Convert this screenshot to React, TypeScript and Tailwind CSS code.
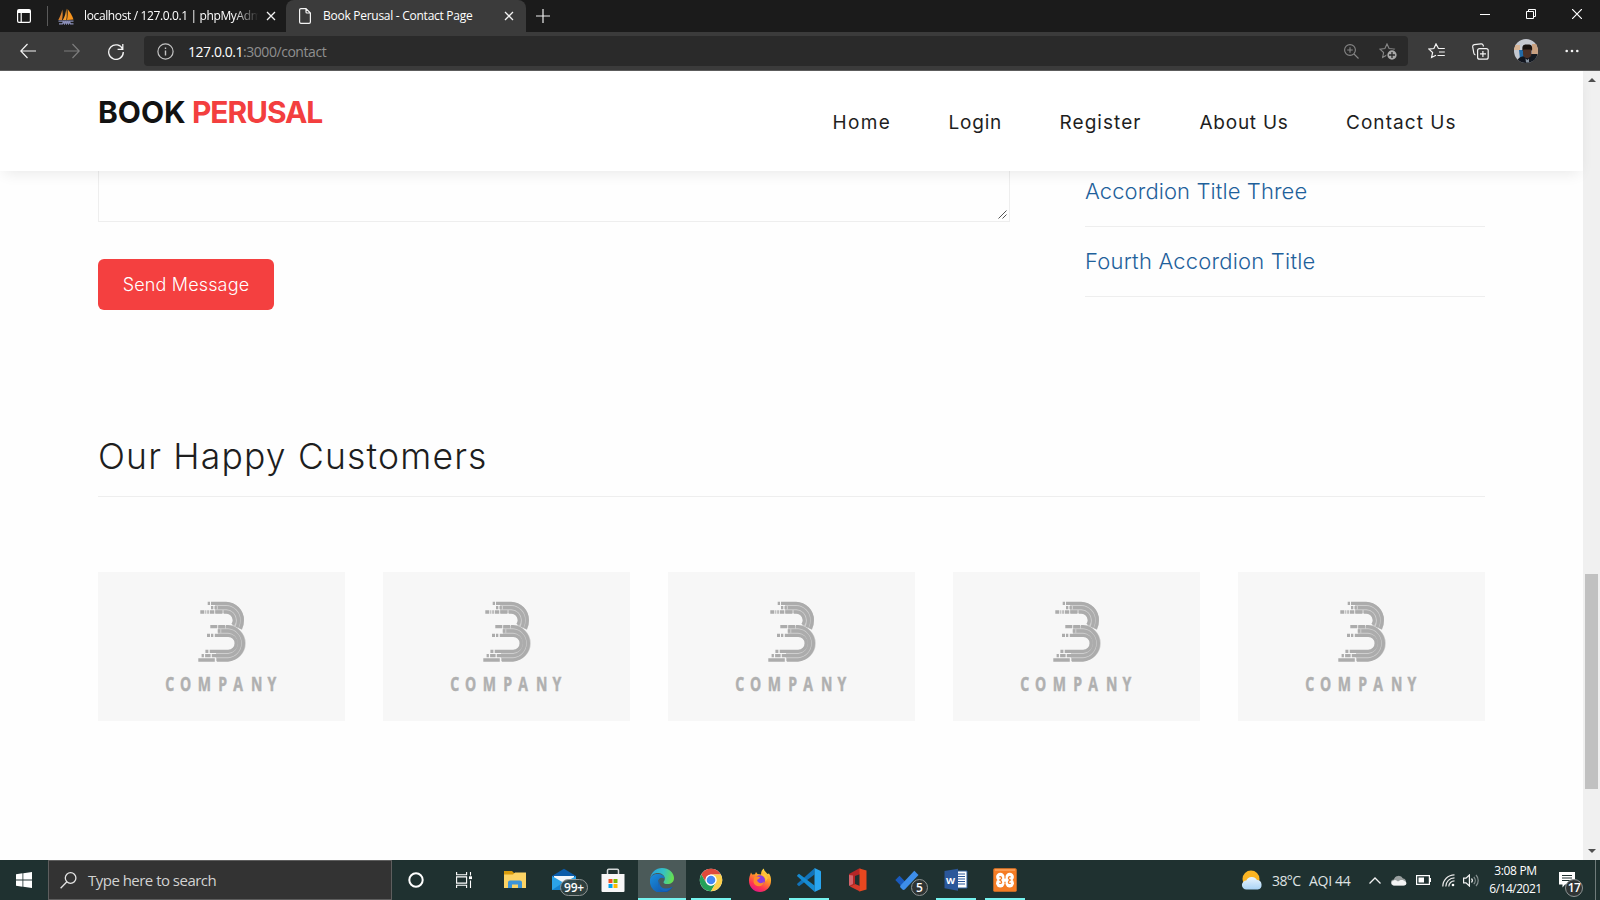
import React from "react";

type IconProps = { className?: string };

/* ---------- Browser chrome ---------- */

const CloseGlyph = ({ className = "" }: IconProps) => (
  <svg className={className} viewBox="0 0 10 10" fill="none" stroke="#f2f2f2" strokeWidth="1.3">
    <path d="M1 1l8 8M9 1L1 9" />
  </svg>
);

function TabStrip() {
  return (
    <div className="flex h-8 bg-[#1b1b1b] text-[12px] text-white">
      <div className="flex w-[47px] items-center pl-[17px]">
        <svg width="14" height="14" viewBox="0 0 14 14">
          <path fillRule="evenodd" fill="#fff" d="M2 0h10a2 2 0 0 1 2 2v10a2 2 0 0 1-2 2H2a2 2 0 0 1-2-2V2a2 2 0 0 1 2-2zm-.8 4v8a.8.8 0 0 0 .8.8h1.6V4zm3.6 0v8.800h7.200a.8.8 0 0 0 .8-.8V4z" />
        </svg>
      </div>
      <div className="mt-1.5 h-5 w-px bg-[#5a5a5a]" />
      <div className="flex w-[238px] items-center pl-[10px]">
        <svg width="16" height="17" viewBox="0 0 16 17" className="shrink-0">
          <path d="M.3 12C2 9 3.500 5 4.300 1.500 4.900 5 4.800 9 4 12z" fill="#d9822f" />
          <path d="M4.800 12C6.800 9 8 4.500 8.200.500 9 4.500 9 9 8.300 12z" fill="#f89c2c" />
          <path d="M9 12c.7-3 .8-7 .6-11C12 4 14.500 8 15.500 11.600z" fill="#f7941d" />
          <path d="M.5 13.200h15M1 15.800h3.500l1-2 1 2 1-2 1 2 1-2 1 2 1-2 1 2h3" fill="none" stroke="#8b8fb8" strokeWidth="1.300" />
        </svg>
        <span className="ml-[10px] w-[178px] whitespace-nowrap tracking-[-0.37px] [mask-image:linear-gradient(to_right,#000_84%,transparent_98%)]">localhost / 127.0.0.1 | phpMyAdm</span>
        <CloseGlyph className="ml-[4px] h-[10px] w-[10px] shrink-0" />
      </div>
      <div className="flex w-[240px] items-center rounded-t-lg bg-[#3b3b3b] pl-[13px]">
        <svg width="12" height="16" viewBox="0 0 12 16" fill="none" stroke="#f4f4f4" strokeWidth="1.200">
          <path d="M2 .6h5L11.400 5v9a1.400 1.400 0 0 1-1.400 1.400H2A1.400 1.400 0 0 1 .6 14V2A1.400 1.400 0 0 1 2 .6zM7 .8V4a1 1 0 0 0 1 1h3.200" />
        </svg>
        <span className="ml-3 w-[176px] whitespace-nowrap tracking-[-0.27px]">Book Perusal - Contact Page</span>
        <CloseGlyph className="ml-[5px] h-[10px] w-[10px]" />
      </div>
      <div className="flex flex-1 items-center pl-[10px]">
        <svg width="14" height="14" viewBox="0 0 14 14" stroke="#eee" strokeWidth="1.200"><path d="M7 0v14M0 7h14" /></svg>
      </div>
      <div className="flex w-[120px] items-start gap-9 pt-[9px]">
        <svg width="10" height="10" viewBox="0 0 10 10"><path d="M0 5.500h10" stroke="#fff" /></svg>
        <svg width="10" height="10" viewBox="0 0 10 10" fill="none" stroke="#fff"><path d="M.5 2.500h7v7h-7zM2.500 2.500v-2h7v7h-2" /></svg>
        <svg width="10" height="10" viewBox="0 0 10 10" stroke="#fff" strokeWidth="1.200"><path d="M0 0l10 10M10 0L0 10" /></svg>
      </div>
    </div>
  );
}

const star = "M8 .9l2.100 4.600 5 .6-3.700 3.400 1 5L8 12l-4.400 2.500 1-5L.9 6.100l5-.6z";

function Toolbar() {
  return (
    <div className="flex h-[39px] items-center border-b border-[#5c5c5c] bg-[#3b3b3b] pl-5">
      <svg width="16" height="16" viewBox="0 0 16 16" fill="none" stroke="#f4f4f4" strokeWidth="1.200"><path d="M16 8H.8M7.500 1L.8 8l6.700 7" /></svg>
      <svg className="ml-7" width="16" height="16" viewBox="0 0 16 16" fill="none" stroke="#7d7d7d" strokeWidth="1.200"><path d="M0 8h15.200M8.500 1l6.700 7-6.700 7" /></svg>
      <svg className="ml-7" width="16" height="17" viewBox="0 0 16 17" fill="none" stroke="#f4f4f4" strokeWidth="1.300"><path d="M14.700 6.200A7.300 7.300 0 1 0 15.300 9M14.800 1v5.300H9.600" /></svg>
      <div className="ml-5 flex h-[30px] w-[1264px] items-center rounded bg-[#2a2a2a] pl-[13px]">
        <svg width="17" height="17" viewBox="0 0 17 17" fill="none" stroke="#c4c4c4" strokeWidth="1.200"><circle cx="8.500" cy="8.500" r="7.600" /><path d="M8.500 7.400v5M8.500 4.600v1.300" strokeWidth="1.400" /></svg>
        <span className="ml-[14px] flex-1 text-[14px] tracking-[-0.45px] text-[#8f8f8f]"><span className="text-white">127.0.0.1</span>:3000/contact</span>
        <svg width="15" height="15" viewBox="0 0 15 15" fill="none" stroke="#868686" strokeWidth="1.100"><circle cx="6" cy="6" r="5.400" /><path d="M10 10l4.500 4.500M3.200 6h5.600M6 3.200v5.600" /></svg>
        <svg className="ml-5 mr-[10px]" width="19" height="17" viewBox="0 0 19 17" fill="none" stroke="#868686" strokeWidth="1.100"><path d={star} /><circle cx="13" cy="12" r="5.200" fill="#a8a8a8" stroke="#2a2a2a" /><path d="M13 9v6M10 12h6" stroke="#2a2a2a" strokeWidth="1.300" /></svg>
      </div>
      <svg className="ml-5" width="17" height="17" viewBox="0 0 17 17" fill="none" stroke="#f4f4f4" strokeWidth="1.200">
        <path d="M10.500 5.500L8 .9 5.900 5.500l-5 .6 3.700 3.400-1 5L8 12.300M10.200 5.500h6.600M11 9h5.800M9.500 12.500h7.300" />
      </svg>
      <svg className="ml-[27px]" width="17" height="17" viewBox="0 0 17 17" fill="none" stroke="#f4f4f4" strokeWidth="1.200">
        <rect x="5.600" y="5.600" width="10.600" height="10.600" rx="2" /><path d="M10.900 8v6M8 10.900h6M3.400 11.800A2 2 0 0 1 1.800 10L.7 3.900A2 2 0 0 1 2.300 1.700L9 .8a2 2 0 0 1 2.200 1.500l.3 1.200" />
      </svg>
      <svg className="ml-[25px]" width="24" height="24" viewBox="0 0 24 24">
        <defs><clipPath id="avatar"><circle cx="12" cy="12" r="12" /></clipPath></defs>
        <g clipPath="url(#avatar)">
          <path d="M0 0h24v24H0z" fill="#c4c8d0" /><path d="M0 6h6v5H0z" fill="#d8b596" /><path d="M18 5h6v12h-6z" fill="#c8a080" />
          <path d="M5 11h6v9H6z" fill="#236ba8" /><path d="M3 24c0-5 4-7 10.500-7s9.500 2 9.500 7z" fill="#11151e" /><path d="M16 15h8v7h-8z" fill="#141a22" />
          <path d="M9 10h8.500v5c0 5.500-8.500 5.500-8.500 0z" fill="#4d3127" /><path d="M8.500 12c-.8-7 2-6.500 5-6.500s5.300 0 4.500 6.500l-1-1.500H9.500z" fill="#17110f" />
          <path d="M11.500 19.500l2 1.500 1.500-1.500v4h-3z" fill="#8793a0" />
        </g>
      </svg>
      <svg className="ml-[27px]" width="14" height="4" viewBox="0 0 14 4" fill="#f4f4f4"><circle cx="1.700" cy="2" r="1.300" /><circle cx="7" cy="2" r="1.300" /><circle cx="12.300" cy="2" r="1.300" /></svg>
    </div>
  );
}

/* ---------- Web page ---------- */

function SiteHeader() {
  return (
    <header className="relative z-10 flex h-[100px] justify-between bg-white pl-[98px] pr-[126px] shadow-[0_6px_14px_-4px_rgba(0,0,0,0.09)]">
      <h2 className="flex whitespace-nowrap pt-5 text-[30px] leading-[42px] font-bold text-[#121212]">
        <span className="w-[94px]">BOOK</span>
        <span className="tracking-[-1.100px] text-[#f33f3f]">PERUSAL</span>
      </h2>
      <nav className="flex pt-10 text-[19px] leading-6 whitespace-nowrap text-[#1e1e1e]">
        <a className="w-[116px] tracking-[1.400px]">Home</a>
        <a className="w-[111px] tracking-[0.800px]">Login</a>
        <a className="w-[140px] tracking-[1.050px]">Register</a>
        <a className="w-[146.500px] tracking-[0.750px]">About Us</a>
        <a className="w-[111px] tracking-[1.050px]">Contact Us</a>
      </nav>
    </header>
  );
}

function Contact() {
  return (
    <section className="flex justify-between">
      <div className="w-[912px]">
        <div className="flex h-[51px] items-end justify-end border border-t-0 border-[#eee]">
          <svg className="mr-[2px] mb-[2px]" width="9" height="9" viewBox="0 0 9 9" stroke="#555" strokeWidth="1"><path d="M.5 8.500l8-8M4.500 8.500l4-4" /></svg>
        </div>
        <button className="mt-[37px] flex h-[51px] w-44 items-center justify-center rounded-md bg-[#f44040] text-[18px] font-light tracking-[0.150px] text-white">Send Message</button>
      </div>
      <ul className="w-[400px] text-[22px] font-[340] whitespace-nowrap text-[#1f619b]">
        <li className="h-[56px] border-b border-[#eee] pt-[4px] leading-8 tracking-[0.100px]">Accordion Title Three</li>
        <li className="h-[70px] border-b border-[#eee] pt-[18px] leading-8 tracking-[0.200px]">Fourth Accordion Title</li>
      </ul>
    </section>
  );
}

function CompanyLogo() {
  return (
    <svg width="247" height="149" viewBox="0 0 247 149" className="block bg-[#f7f7f7]">
      <g fill="none" stroke="#cfcfcf" strokeWidth="11">
        <path d="M117 35.700h11.500a12.500 12.500 0 0 1 12 12.500q0 4-1.500 7.500M120 59h10a12.200 12.200 0 0 1 0 24.500H118" />
      </g>
      <g fill="none" stroke="#acacac" strokeWidth="3.300">
        <path d="M109.700 31.300h2.300m1 0h15a16.800 16.800 0 0 1 16.300 17q0 5-2 8.500" />
        <path d="M113 35.700h2.300m1.200 0h2.300m1.200 0h8.500a12.500 12.500 0 0 1 12 12.500q0 4-1.500 7" />
        <path d="M102.300 40h4m1 0h1m1 0h1.500m1 0h4.500m1 0h7m1.500 0h2.500a8.200 8.200 0 0 1 6.500 12.800" />
        <path d="M112.300 54.700h7m1 0h6.700m1 0h2a16.700 16.700 0 0 1 0 33.300H118.800m-2 0H100.300" />
        <path d="M119.700 59h2.600m1 0h7a12.400 12.400 0 0 1 0 24.700H113.800m-1.200 0h-5.500m-1.200 0h-2.300" />
        <path d="M109 63.300h3m1 0h2.300m1.500 0h13.500a8 8 0 0 1 0 16H111.700m-1.300 0h-3" />
      </g>
      <text transform="scale(.72 1)" x="93.500 114 138.500 167 188 212.500 235.500" y="119" fill="#b0b0b0" stroke="#b0b0b0" strokeWidth=".5" fontSize="19.500" fontWeight="700" className="font-['Open_Sans',sans-serif]">COMPANY</text>
    </svg>
  );
}

function Scrollbar() {
  return (
    <div className="flex w-[17px] flex-col items-center bg-[#f0f0f0]">
      <svg className="mt-[7px]" width="8" height="4" viewBox="0 0 8 4" fill="#505050"><path d="M4 0l4 4H0z" /></svg>
      <div className="mt-[492px] h-[215px] w-[13px] bg-[#c1c1c1]" />
      <svg className="mt-[60px]" width="8" height="4" viewBox="0 0 8 4" fill="#505050"><path d="M0 0h8L4 4z" /></svg>
    </div>
  );
}

function Page() {
  return (
    <div className="flex h-[789px] overflow-hidden bg-[#fefefe] font-[Inter,sans-serif]">
      <div className="w-[1583px]">
        <SiteHeader />
        <main className="pl-[98px] pr-[98px]">
          <Contact />
          <h2 className="mt-[122px] h-[65px] border-b border-[#eee] text-[35.500px] leading-[49px] font-[340] tracking-[1.180px] whitespace-nowrap text-[#1e1e1e]">Our Happy Customers</h2>
          <div className="mt-[75px] flex justify-between">
            {[0, 1, 2, 3, 4].map((n) => <CompanyLogo key={n} />)}
          </div>
        </main>
      </div>
      <Scrollbar />
    </div>
  );
}

/* ---------- Taskbar ---------- */

function App24({ children, open, active }: { children: React.ReactNode; open?: boolean; active?: boolean }) {
  return (
    <div className="flex w-[49px] justify-center">
      <div className={`relative flex h-10 items-center justify-center ${active ? "w-12 bg-[#4b5a59]" : "w-10"} ${open ? "border-b-2 border-[#76f3ef] pt-0.5" : ""}`}>{children}</div>
    </div>
  );
}

const Folder = () => (
  <svg width="24" height="24" viewBox="0 0 24 24"><path d="M1 3h8l2 2h11v5H1z" fill="#d89b0c" /><path d="M1 6.500h9l2-2h11V20H1z" fill="#fcd364" /><path d="M5 20v-5.500a2 2 0 0 1 2-2h10a2 2 0 0 1 2 2V20h-4v-3.500H9V20z" fill="#3d94d8" /></svg>
);
const Mail = () => (
  <svg width="24" height="24" viewBox="0 0 24 24"><path d="M0 8L12 .8 24 8v4H0z" fill="#0c5ba8" /><path d="M2 8h20v10H2z" fill="#f3f6f9" /><path d="M0 8l12 7 12-7v14H0z" fill="#2ba3e8" /><path d="M0 22l12-8 12 8z" fill="#1483d0" /></svg>
);
const Store = () => (
  <svg width="24" height="25" viewBox="0 0 24 25"><path d="M6.500 7V2.500a1.200 1.200 0 0 1 1.200-1.200h8.600a1.200 1.200 0 0 1 1.200 1.200V7" fill="none" stroke="#d5d9d9" strokeWidth="1.500" /><path d="M.5 6h23v17a1 1 0 0 1-1 1h-21a1 1 0 0 1-1-1z" fill="#f7f7f7" /><path d="M7.500 11h4v4h-4z" fill="#f25022" /><path d="M12.500 11h4v4h-4z" fill="#7fba00" /><path d="M7.500 16h4v4h-4z" fill="#00a4ef" /><path d="M12.500 16h4v4h-4z" fill="#ffb900" /></svg>
);
const Edge = () => (
  <svg width="24" height="24" viewBox="0 0 24 24">
    <defs>
      <linearGradient id="edgeTop" x1="0" x2="1" y1=".2" y2=".4"><stop stopColor="#259fe0" /><stop offset=".55" stopColor="#35c1c4" /><stop offset="1" stopColor="#66e04f" /></linearGradient>
      <linearGradient id="edgeBody" x1="0" x2="1" y1="0" y2="1"><stop stopColor="#1b8fdc" /><stop offset="1" stopColor="#0f4ba4" /></linearGradient>
    </defs>
    <path d="M.1 11C.8 4.500 6 0 12 0c6.800 0 12 4.700 12 10 0 4-3 6-6.500 6-3 0-4-1-4-1.800 0-.8 1.300-1.300 1.300-3.500C14.800 7 11 5 7.500 5 4 5 1 7 .1 11z" fill="url(#edgeTop)" />
    <path d="M.1 11C1 7.500 4 6 7.500 6c4 0 7.200 2 7.300 4.700C11 8 8 11 8 14c0 5 5 8 10 6.500 1.500-.4 3-1.400 4-1.800.5-.1.500.2.300.5A12 12 0 0 1 .1 11z" fill="url(#edgeBody)" />
    <path d="M9.500 11.500C6 16 9 24 16.500 23c2.500-.8 4.700-2.500 5.800-3.900-8 3.500-14 .9-12.800-7.600z" fill="#1769bd" />
  </svg>
);
const Chrome = () => (
  <svg width="24" height="24" viewBox="0 0 24 24"><circle cx="12" cy="12" r="11.200" fill="#f7f7f7" /><path d="M2.300 6.400A11.200 11.200 0 0 1 21.700 6.400H12a5.600 5.600 0 0 0-4.900 8.400z" fill="#e04a3c" /><path d="M2.300 6.400A11.200 11.200 0 0 0 12 23.200l4.900-8.400a5.600 5.600 0 0 1-9.800 0z" fill="#24a158" /><path d="M21.700 6.400H12a5.600 5.600 0 0 1 4.900 8.400L12 23.200A11.200 11.200 0 0 0 21.700 6.400z" fill="#fdd04a" /><circle cx="12" cy="12" r="5.400" fill="#fff" /><circle cx="12" cy="12" r="4.300" fill="#4587f3" /></svg>
);
const Firefox = () => (
  <svg width="24" height="24" viewBox="0 0 24 24">
    <defs><linearGradient id="fox" x1=".8" x2=".3" y1="0" y2="1"><stop stopColor="#ffe84a" /><stop offset=".4" stopColor="#ff9a26" /><stop offset=".75" stopColor="#ff3750" /><stop offset="1" stopColor="#e31587" /></linearGradient></defs>
    <path d="M3 4.500l1.200 2L7 6.200l1-2.200 1.500 2 3.500.4C13 3.500 14 1.500 16 .5c-.3 2 1.500 3 3.500 5.500L21 5.500c1.500 2 2.300 5 2 7.500a11 11 0 0 1-22 0C.8 9.500 2 7.500 3 4.500z" fill="url(#fox)" />
    <circle cx="12" cy="12.300" r="5" fill="#8a3de0" /><path d="M6 9.500c2-1.500 4.500-1.500 6.500.2-2 .3-1.800 2-3.500 2.300.5 3 5 4.500 7 1.500-.5 6-9 6.500-10.500.5z" fill="#ff8b2a" /><path d="M13 7c3 .5 5 3.500 4.500 6.500L20 10l-3-4z" fill="#ffc53b" />
  </svg>
);
const VsCode = () => (
  <svg width="24" height="24" viewBox="0 0 24 24"><path d="M17.500 6.500L2 18.300.2 16.800v-1L17.500.2z" fill="#1173ba" /><path d="M17.500 17.500L2 5.700.2 7.200v1l17.300 15.600z" fill="#168bd2" /><path d="M17.500.1l5.800 2.700a1.200 1.200 0 0 1 .7 1.100v16.200a1.200 1.200 0 0 1-.7 1.100l-5.800 2.700z" fill="#29a5ef" /></svg>
);
const Office = () => (
  <svg width="20" height="24" viewBox="0 0 20 24"><path d="M1 6l10-5.500h1.500V6L7 8v8L2.500 18.500 1 17z" fill="#b52626" /><path d="M11.500.5l7 2v19l-7 2z" fill="#e8471f" /><path d="M2 18.500l5-2.500 5 2v5.500z" fill="#d63a2a" /><path d="M1 7l4 .5V16l-4 2z" fill="#ec98a5" opacity=".55" /></svg>
);
const Todo = () => (
  <svg width="24" height="24" viewBox="0 0 24 24"><path d="M.3 12l4.200-4.200L12.500 16l-4.200 4.200z" fill="#195abd" /><path d="M5.500 17.400L19.300 2.700l4.200 4.200L10 21.300a2 2 0 0 1-2.800 0L5 19z" fill="#3d8eea" /></svg>
);
const Word = () => (
  <svg width="24" height="24" viewBox="0 0 24 24"><path d="M12 3h11v17H12z" fill="#fff" stroke="#2f5f9d" /><path d="M14 6h7M14 8.500h7M14 11h7M14 13.500h7M14 16h7" stroke="#2b579a" strokeWidth="1.200" /><path d="M.5 3L14 .7v22L.5 20.300z" fill="#2b579a" /><text x="2" y="15.500" fontSize="9.500" fontWeight="700" fill="#fff" textLength="9" lengthAdjust="spacingAndGlyphs">W</text></svg>
);
const Xampp = () => (
  <svg width="24" height="24" viewBox="0 0 24 24">
    <rect x=".3" y=".3" width="23.400" height="23.400" rx="1.500" fill="#f57c24" />
    <path d="M2 2h20" stroke="#ffad6c" strokeWidth="1.200" />
    <g fill="#fff"><circle cx="7.300" cy="9" r="4.200" /><circle cx="16.700" cy="9" r="4.200" /><circle cx="7.300" cy="15.200" r="4.200" /><circle cx="16.700" cy="15.200" r="4.200" /><path d="M7 10.400h10v3.400H7z" /></g>
    <path d="M6.300 9c1.800-.8 2.800.5 2 1.900l-1.600 1.200 1.600 1.200c.8 1.400-.2 2.700-2 1.900M17.700 9c-1.800-.8-2.800.5-2 1.900l1.600 1.200-1.600 1.200c-.8 1.400.2 2.700 2 1.900" fill="none" stroke="#f57c24" strokeWidth="1.300" />
  </svg>
);

function Tray() {
  return (
    <div className="flex flex-1 items-center justify-end text-[14px] text-[#dfe3e3]">
      <svg width="22" height="21" viewBox="0 0 22 21">
        <defs><linearGradient id="cloud" x1="0" x2="0" y1="0" y2="1"><stop stopColor="#eaf5ff" /><stop offset="1" stopColor="#a9d3f5" /></linearGradient></defs>
        <circle cx="10" cy="9" r="8.500" fill="#fbb423" /><path d="M5.500 19.500a4.500 4.500 0 0 1-.2-9A6 6 0 0 1 16 10a4.800 4.800 0 0 1 .7 9.500z" fill="url(#cloud)" />
      </svg>
      <span className="ml-[9px] w-[37px] tracking-[-0.600px] whitespace-nowrap">38°C</span>
      <span className="w-[60px] tracking-[-0.300px] whitespace-nowrap">AQI 44</span>
      <svg width="12" height="7" viewBox="0 0 12 7" fill="none" stroke="#f2f2f2" strokeWidth="1.300"><path d="M.5 6.500L6 1l5.500 5.500" /></svg>
      <svg className="ml-[10px]" width="16" height="11" viewBox="0 0 16 11"><path d="M3 10.500a3 3 0 0 1-.2-6A5 5 0 0 1 12 3.500a3.600 3.600 0 0 1 .5 7z" fill="#9aa0a0" /><path d="M2.800 10.500A2.700 2.700 0 0 1 1 6.500c2-2 4-2 6 0 2-2 5-2.500 8 .5a2.500 2.500 0 0 1-1.500 3.500z" fill="#f4f4f4" /></svg>
      <svg className="ml-[9px]" width="15" height="10" viewBox="0 0 15 10"><path d="M.6.6h12.800v8.800H.6z" fill="none" stroke="#fff" strokeWidth="1.200" /><path d="M2.500 2.500H8v5H2.500zM14 3h1v4h-1z" fill="#fff" /></svg>
      <svg className="ml-[11px]" width="13" height="13" viewBox="0 0 13 13" fill="none" stroke="#e8e8e8" strokeWidth="1.200"><path d="M.8 12.500A11.700 11.700 0 0 1 12.500.8M3.800 12.500a8.700 8.700 0 0 1 8.700-8.700M6.800 12.500a5.700 5.700 0 0 1 5.700-5.700" /><circle cx="11" cy="11" r="1.300" fill="#fff" stroke="none" /></svg>
      <svg className="ml-[8px]" width="17" height="13" viewBox="0 0 17 13" fill="none" stroke="#f2f2f2" strokeWidth="1.200"><path d="M.6 4.200H3L6.400 1v11L3 8.800H.6z" /><path d="M8.500 4.500a3 3 0 0 1 0 4" /><path d="M10.800 2.800a5.500 5.500 0 0 1 0 7.400M13 1a8 8 0 0 1 0 11" stroke="#869090" /></svg>
      <div className="ml-[7px] flex w-[57px] flex-col items-center text-[12px] leading-[18px] whitespace-nowrap text-white">
        <span className="tracking-[-0.350px]">3:08 PM</span>
        <span className="tracking-[-0.500px]">6/14/2021</span>
      </div>
      <div className="relative ml-[15px] h-4 w-4">
        <svg width="16" height="16" viewBox="0 0 16 16"><path d="M0 0h16v12.500H6L3.500 15.500v-3H0z" fill="#fff" /><path d="M3 3.500h10M3 6h10M3 8.500h10" stroke="#1f3130" strokeWidth="1" /></svg>
        <span className="absolute top-[7px] left-[6px] flex h-[18px] w-[18px] items-center justify-center rounded-full border border-[#8e9494] bg-[#2f3434] text-[12px] font-semibold tracking-[-0.500px] text-white">17</span>
      </div>
      <div className="ml-5 h-10 w-px bg-[#6f7b7a]" />
      <div className="w-1" />
    </div>
  );
}

function Taskbar() {
  return (
    <footer className="flex h-10 bg-[#1f3130]">
      <div className="flex w-12 items-center justify-center">
        <svg width="16" height="16" viewBox="0 0 16 16" fill="#fff"><path d="M0 2.200L6.500 1.300v6.300H0zM7.300 1.200L16 0v7.600H7.300zM0 8.400h6.500v6.300L0 13.800zM7.300 8.400H16V16l-8.700-1.200z" /></svg>
      </div>
      <div className="flex w-[344px] items-center border border-[#5e5e5e] bg-[#333] pl-[11px]">
        <svg width="17" height="17" viewBox="0 0 17 17" fill="none" stroke="#e4e4e4" strokeWidth="1.300"><circle cx="10.600" cy="6" r="5.300" /><path d="M6.900 9.800L.6 16.200" /></svg>
        <span className="ml-[11px] text-[15px] tracking-[-0.520px] text-[#d2d2d2]">Type here to search</span>
      </div>
      <div className="flex w-12 items-center justify-center">
        <svg width="16" height="16" viewBox="0 0 16 16"><circle cx="8" cy="8" r="6.700" fill="none" stroke="#fff" strokeWidth="2" /></svg>
      </div>
      <div className="mr-[2.500px] flex w-12 items-center justify-center">
        <svg width="16" height="16" viewBox="0 0 16 16" fill="none" stroke="#fff" strokeWidth="1.100"><path d="M.6 0v2.800h10V0M.6 16v-2.800h10V16M.6 4.900h10v6.200H.6zM14.500 0v3.500M14.500 8.500V16" /><path d="M13 4.300h3v2.800h-3z" fill="#fff" stroke="none" /></svg>
      </div>
      <App24><Folder /></App24>
      <App24>
        <Mail />
        <span className="absolute top-[19px] left-[16px] flex h-[17px] w-[28px] items-center justify-center rounded-full border border-[#8e9494] bg-[#30403f]/90 text-[12px] leading-none font-semibold tracking-[-0.200px] text-white">99+</span>
      </App24>
      <App24><Store /></App24>
      <App24 active open><Edge /></App24>
      <App24 open><Chrome /></App24>
      <App24><Firefox /></App24>
      <App24 open><VsCode /></App24>
      <App24><Office /></App24>
      <App24>
        <Todo />
        <span className="absolute top-[19px] left-[24px] flex h-[17px] w-[17px] items-center justify-center rounded-full border border-[#8e9494] bg-[#2f3434] text-[12px] leading-none font-semibold text-white">5</span>
      </App24>
      <App24 open><Word /></App24>
      <App24 open><Xampp /></App24>
      <Tray />
    </footer>
  );
}

export default function App() {
  return (
    <div className="h-[900px] w-[1600px] overflow-hidden font-['Open_Sans',sans-serif]">
      <TabStrip />
      <Toolbar />
      <Page />
      <Taskbar />
    </div>
  );
}
